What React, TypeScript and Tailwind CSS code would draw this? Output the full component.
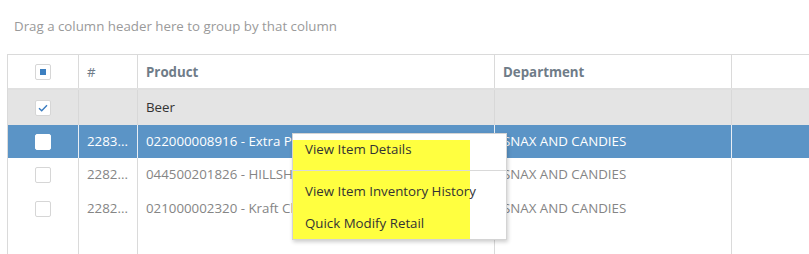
const rows = [
  { id: "2283...", product: "022000008916 - Extra Pepperoni", dept: "SNAX AND CANDIES", selected: true },
  { id: "2282...", product: "044500201826 - HILLSHIRE FARM", dept: "SNAX AND CANDIES", selected: false },
  { id: "2282...", product: "021000002320 - Kraft Cheese", dept: "SNAX AND CANDIES", selected: false },
];

const cols = "grid grid-cols-[71px_59px_357px_237px_100px]";

const Box = ({ variant }: { variant: "partial" | "check" | "empty" | "white" }) => (
  <div
    className={`w-4 h-4 rounded-[2px] border flex items-center justify-center ${
      variant === "white" ? "bg-white border-white" : "bg-white border-[#d6d6d6]"
    }`}
  >
    {variant === "partial" && <div className="w-[6px] h-[6px] bg-[#3c7fc0]"></div>}
    {variant === "check" && (
      <svg width="10" height="8" viewBox="0 0 10 8" fill="none">
        <path d="M1 4.2L3.7 6.8L9 1.2" stroke="#3a7cc0" strokeWidth="1.4" />
      </svg>
    )}
  </div>
);

const App = () => {
  return (
    <div className="w-[809px] h-[254px] overflow-hidden bg-white relative font-['Open_Sans',sans-serif] text-[13.3px]">
      {/* group panel */}
      <div className="h-[54px] pl-[14px] pt-[16px] leading-5 text-[#9a9a9a]">
        Drag a column header here to group by that column
      </div>

      {/* grid */}
      <div className="ml-[7px] w-[900px] border-l border-t border-[#dadada]">
        {/* header */}
        <div className={`${cols} h-[35px] border-b-2 border-[#e0e0e0] font-bold text-[#6f7c88]`}>
          <div className="border-r border-[#dadada] flex items-center justify-center">
            <Box variant="partial" />
          </div>
          <div className="border-r border-[#dadada] flex items-center pl-2 pt-[2px] font-normal">#</div>
          <div className="border-r border-[#dadada] flex items-center pl-2 pt-[2px]">Product</div>
          <div className="border-r border-[#dadada] flex items-center pl-2 pt-[2px]">Department</div>
          <div></div>
        </div>

        {/* group row */}
        <div className={`${cols} h-[35px] bg-[#e4e4e4] text-[#333]`}>
          <div className="border-r border-[#d8d8d8] flex items-center justify-center">
            <Box variant="check" />
          </div>
          <div className="border-r border-[#d8d8d8]"></div>
          <div className="border-r border-[#d8d8d8] flex items-center pl-2">Beer</div>
          <div className="border-r border-[#d8d8d8]"></div>
          <div></div>
        </div>

        {rows.map((r, i) => (
          <div
            key={i}
            className={`${cols} ${i === 0 ? "h-[33px]" : "h-[34px]"} ${
              r.selected ? "bg-[#5b94c6] text-white" : "bg-white text-[#858585]"
            }`}
          >
            <div className={`border-r flex items-center justify-center ${r.selected ? "border-[#e8eef5]" : "border-[#dadada]"}`}>
              <Box variant={r.selected ? "white" : "empty"} />
            </div>
            <div className={`border-r flex items-center pl-2 ${r.selected ? "border-[#e8eef5]" : "border-[#dadada]"}`}>{r.id}</div>
            <div className={`border-r flex items-center pl-2 whitespace-nowrap overflow-hidden ${r.selected ? "border-[#e8eef5]" : "border-[#dadada]"}`}>{r.product}</div>
            <div className={`border-r flex items-center pl-2 ${r.selected ? "border-[#e8eef5]" : "border-[#dadada]"}`}>{r.dept}</div>
            <div></div>
          </div>
        ))}

        {/* empty area */}
        <div className={`${cols} h-[40px]`}>
          <div className="border-r border-[#dadada]"></div>
          <div className="border-r border-[#dadada]"></div>
          <div className="border-r border-[#dadada]"></div>
          <div className="border-r border-[#dadada]"></div>
          <div></div>
        </div>
      </div>

      {/* context menu */}
      <div className="absolute left-[292px] top-[133px] w-[215px] h-[107px] bg-white border border-[#d4d4d4] shadow-[1px_2px_4px_rgba(0,0,0,0.2)] text-[#333]">
        <div className="absolute left-0 top-[6px] w-[177px] h-[99px] bg-[#ffff40]"></div>
        <div className="relative pt-[6px]">
          <div className="h-[20px] pl-3 flex items-center">View Item Details</div>
          <div className="h-[11px] border-b border-[#d9d9d9]"></div>
          <div className="h-[20px] mt-[11px] pl-3 flex items-center">View Item Inventory History</div>
          <div className="h-[20px] mt-[12px] pl-3 flex items-center">Quick Modify Retail</div>
        </div>
      </div>
    </div>
  );
};

export default App;
